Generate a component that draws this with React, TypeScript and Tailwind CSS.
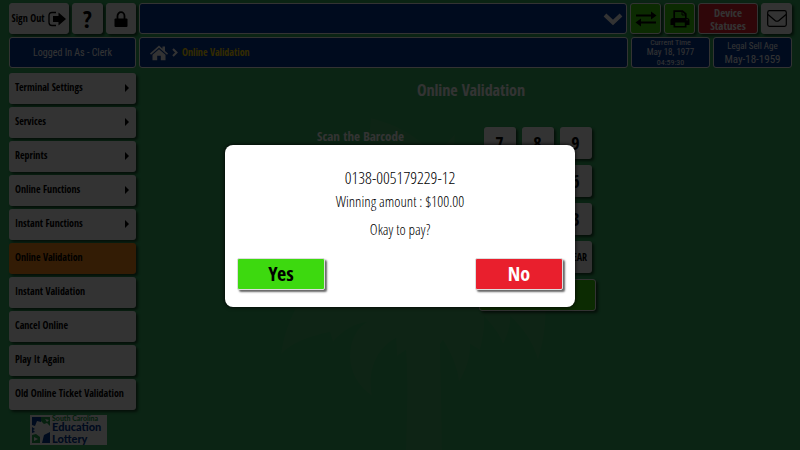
import type { ReactNode } from "react";

const bold = "font-['Open_Sans_Condensed','Roboto_Condensed','Liberation_Sans',sans-serif] font-bold";
const regular = "font-['Open_Sans_Condensed_Light','Roboto_Condensed','Liberation_Sans',sans-serif] font-normal";
const compact = "font-['Roboto_Condensed','Liberation_Sans',sans-serif] font-normal";
const raised = "shadow-[2px_2px_3px_rgba(0,0,0,0.6)]";
const panel = "rounded-[3px] border border-white bg-[#003796] text-white";

const menu = [
  { label: "Terminal Settings", more: true },
  { label: "Services", more: true },
  { label: "Reprints", more: true },
  { label: "Online Functions", more: true },
  { label: "Instant Functions", more: true },
  { label: "Online Validation", active: true },
  { label: "Instant Validation" },
  { label: "Cancel Online" },
  { label: "Play It Again" },
  { label: "Old Online Ticket Validation" },
];

const keys = ["7", "8", "9", "4", "5", "6", "1", "2", "3", "0", "00", "CLEAR"];

function ToolButton({ label, className, children }: { label: string; className: string; children: ReactNode }) {
  return (
    <button
      aria-label={label}
      className={`flex h-[31px] shrink-0 items-center justify-center rounded-[3px] border border-white ${raised} ${className}`}
    >
      {children}
    </button>
  );
}

function SignOutIcon() {
  return (
    <svg viewBox="0 0 18 16" className="h-4 w-[18px]">
      <path d="M8 1.5H4Q1 1.5 1 4.500V11.500Q1 14.500 4 14.500H8" fill="none" stroke="#000" strokeWidth="1.300" />
      <path d="M5 5H10.500V1.500L18 8L10.500 14.500V11H5Z" />
    </svg>
  );
}

function LockIcon() {
  return (
    <svg viewBox="0 0 14 16" className="h-4 w-[14px]">
      <path d="M3.500 8V5A3.500 3.800 0 0 1 10.500 5V8" fill="none" stroke="#000" strokeWidth="1.800" />
      <rect x="0.500" y="7.500" width="13" height="8.500" rx="1" />
    </svg>
  );
}

function ArrowsIcon() {
  return (
    <svg viewBox="0 0 22 16" className="h-4 w-[22px]">
      <path d="M1 3.500H16V0.500L21.500 4.500L16 8.500V5.500H1Z" />
      <path d="M21 10.500H6V7.500L0.500 11.500L6 15.500V12.500H21Z" />
    </svg>
  );
}

function PrinterIcon() {
  return (
    <svg viewBox="0 0 20 18" className="h-[18px] w-5">
      <path d="M4.200 9V1.200H12.500L15.800 4V9" fill="none" stroke="#000" strokeWidth="1.700" />
      <path d="M12 1V5H16" fill="none" stroke="#000" strokeWidth="1" />
      <path
        fillRule="evenodd"
        d="M3 8H17Q19.500 8 19.500 10.500V15H16.500V17.500H3.500V15H0.500V10.500Q0.500 8 3 8ZM5.200 12.500V16H14.800V12.500ZM16.300 9.800A.8 .8 0 1 0 17.900 9.800A.8 .8 0 1 0 16.300 9.800Z"
      />
    </svg>
  );
}

function MailIcon() {
  return (
    <svg viewBox="0 0 20 17" className="h-[17px] w-5" fill="none" stroke="#000" strokeWidth="1.200">
      <rect x="0.700" y="0.700" width="18.600" height="15.600" rx="1.800" />
      <path d="M1 4.500L8 10.500Q10 12 12 10.500L19 4.500" />
    </svg>
  );
}

function HomeIcon() {
  return (
    <svg viewBox="0 0 18 16" className="h-4 w-[18px]" fill="#fff">
      <path d="M9 0.500L12.500 3.700V1.500H15V6L18 8.600L17 9.800L9 2.800L1 9.800L0 8.600Z" />
      <path d="M9 4.200L15.500 9.800V15.300H10.800V10.800H7.200V15.300H2.500V9.800Z" />
    </svg>
  );
}

function LotteryLogo() {
  return (
    <div role="img" aria-label="South Carolina Education Lottery" className="ml-[21px] mt-[2px] flex h-[30px] w-[77px] items-center gap-[2px] bg-white pl-[2px]">
      <svg viewBox="0 0 18 26" className="h-[26px] w-[18px] shrink-0">
        <path d="M0 0H9V5L5 4L3 9L0 8Z" fill="#003796" />
        <path d="M9 0H18V9L15 6L12 7L9 4Z" fill="#22a04c" />
        <path d="M0 18L4 17L8 20V26H0Z" fill="#22a04c" />
        <path d="M10 26L12 18L18 15V26Z" fill="#003796" />
        <path d="M0 10L3 12L1 13L3 15L0 16Z" fill="#003796" />
        <path d="M2 20V24L6 22Z" fill="#fff" />
        <path d="M13 2L17 3L15 5Z" fill="#fff" />
      </svg>
      <div className="flex flex-col font-['Lato','Liberation_Sans',sans-serif] font-black text-[#003796]">
        <span className="whitespace-nowrap text-[7px] leading-[7px] text-[#22a04c]">South Carolina</span>
        <span className="text-[11px] leading-[10px]">Education</span>
        <span className="text-[11px] leading-[13px]">Lottery</span>
      </div>
    </div>
  );
}

function Palmetto() {
  return (
    <svg viewBox="0 0 300 340" className="absolute bottom-0 left-[275px] h-[340px] w-[300px]" fill="#46b469">
      <path d="M96 8C126 16 146 28 160 48C166 38 172 34 180 24C180 38 176 50 172 60C220 60 262 110 270 190C272 215 268 232 263 250C258 232 248 218 235 206C236 216 232 226 228 234C224 222 214 212 209 206C210 216 208 228 205 240L195 234C196 248 190 262 184 272C182 254 174 240 168 230L165 234C166 280 167 310 167 340H131C132 300 133 270 131 240L122 246L121 228C102 238 92 260 97 286C80 274 72 256 76 236C78 226 84 216 92 212C78 214 66 222 58 232L55 222C36 226 18 232 6 244C12 200 40 160 84 130Z" />
    </svg>
  );
}

export default function App() {
  return (
    <div className={`relative min-h-screen overflow-hidden bg-[#37b464] text-black ${bold}`}>
      <Palmetto />

      <div className="relative flex flex-col gap-[3px] py-[3px] pl-[9px] pr-2">
        <header className="flex flex-col gap-[3px]">
          <div className="flex gap-[3px]">
            <div className="flex w-[127px] shrink-0 gap-[3px]">
              <ToolButton label="Sign Out" className="w-[60px] gap-1 bg-white text-[10px]">
                <span className="whitespace-nowrap">Sign Out</span>
                <SignOutIcon />
              </ToolButton>
              <ToolButton label="Help" className="flex-1 bg-white text-[24px] leading-6">
                ?
              </ToolButton>
              <ToolButton label="Lock" className="flex-1 bg-white">
                <LockIcon />
              </ToolButton>
            </div>
            <div className="relative flex min-w-0 flex-1">
              <select aria-label="Messages" className={`h-[31px] w-full appearance-none ${panel}`} />
              <svg viewBox="0 0 20 14" className="pointer-events-none absolute right-1 top-[9px] h-[14px] w-5" fill="none" stroke="#fff" strokeWidth="4">
                <path d="M2 3L10 10.500L18 3" />
              </svg>
            </div>
            <ToolButton label="Transfer" className="w-[31px] bg-[#3cd70a]">
              <ArrowsIcon />
            </ToolButton>
            <ToolButton label="Printer" className="w-[31px] bg-[#3cd70a]">
              <PrinterIcon />
            </ToolButton>
            <ToolButton label="Device Statuses" className="w-[60px] bg-[#e91f2d] text-[11px] leading-[13px] text-white">
              Device
              <br />
              Statuses
            </ToolButton>
            <ToolButton label="Mail" className="w-[31px] bg-white">
              <MailIcon />
            </ToolButton>
          </div>

          <div className="flex gap-[3px]">
            <div className={`flex h-[31px] w-[127px] shrink-0 items-center justify-center ${panel} ${compact} text-[10px]`}>
              Logged In As - Clerk
            </div>
            <nav aria-label="Breadcrumb" className={`flex h-[31px] min-w-0 flex-1 items-center gap-1 pl-[10px] text-[10px] ${panel}`}>
              <a href="#home" aria-label="Home">
                <HomeIcon />
              </a>
              <svg viewBox="0 0 6 9" className="h-[9px] w-[6px]" fill="none" stroke="#fff" strokeWidth="2">
                <path d="M1 1L4.500 4.500L1 8" />
              </svg>
              <a href="#validation" className="text-[#ffd700]">
                Online Validation
              </a>
            </nav>
            <div className={`flex h-[31px] w-[79px] shrink-0 flex-col items-center justify-center text-[8px] leading-[9px] ${panel} ${compact}`}>
              <span>Current Time</span>
              <span className="text-[9px] leading-[11px]">May 18, 1977</span>
              <span>04:59:30</span>
            </div>
            <div className={`flex h-[31px] w-[79px] shrink-0 flex-col items-center justify-center text-[9px] leading-[13px] ${panel} ${compact}`}>
              <span>Legal Sell Age</span>
              <span className="text-[11px]">May-18-1959</span>
            </div>
          </div>
        </header>

        <div className="flex pt-[2px]">
          <aside className="flex w-[127px] shrink-0 flex-col gap-[3px]">
            {menu.map((item) => (
              <button
                key={item.label}
                className={`flex h-[31px] items-center justify-between whitespace-nowrap rounded-[3px] pb-[2px] pl-[6px] pr-[7px] text-left text-[10px] ${raised} ${
                  item.active ? "bg-[#ff8c19]" : "bg-white"
                }`}
              >
                {item.label}
                {item.more && (
                  <svg viewBox="0 0 4 8" className="h-2 w-1">
                    <path d="M0 0L4 4L0 8Z" />
                  </svg>
                )}
              </button>
            ))}
            <LotteryLogo />
          </aside>

          <main className="flex flex-1 flex-col items-center pl-[14px] pt-[5px] text-white">
            <h1 className="text-[16px] leading-6">Online Validation</h1>
            <div className="mt-[25px] flex pr-[104px]">
              <p className="w-[237px] text-center text-[13px] leading-[18px]">Scan the Barcode</p>
              <div className="flex w-[117px] flex-col items-center gap-[6px] text-black">
                <div className="grid grid-cols-3 gap-[6px]">
                  {keys.map((key) => (
                    <button
                      key={key}
                      className={`flex size-8 items-center justify-center rounded-[3px] bg-white ${raised} ${
                        key === "CLEAR" ? "text-[10px]" : "text-[18px]"
                      }`}
                    >
                      {key}
                    </button>
                  ))}
                </div>
                <button aria-label="Submit" className={`h-8 w-full rounded-[3px] border border-white bg-[#3cd70a] ${raised}`} />
              </div>
            </div>
          </main>
        </div>
      </div>

      <div className="absolute inset-0 flex justify-center bg-black/80">
        <div
          role="dialog"
          aria-modal="true"
          aria-label="Confirm payment"
          className={`mt-[145px] flex h-[162px] w-[350px] flex-col rounded-[8px] bg-white px-3 pt-[21px] text-center text-black shadow-[0_0_4px_#000] ${regular}`}
        >
          <p className="text-[17px] leading-6">0138-005179229-12</p>
          <p className="text-[15px] leading-[22px]">Winning amount : $100.00</p>
          <p className="mt-[6px] text-[15px] leading-[22px]">Okay to pay?</p>
          <div className={`mt-[18px] flex justify-between text-[20px] ${bold}`}>
            <button className="h-8 w-[88px] rounded-[2px] border border-[#ddd] bg-[#3dd90f] leading-6 text-black shadow-[2px_2px_2px_rgba(0,0,0,0.6)]">
              Yes
            </button>
            <button className="h-8 w-[88px] rounded-[2px] border border-[#ddd] bg-[#e91f2d] leading-6 text-white shadow-[2px_2px_2px_rgba(0,0,0,0.6)]">
              No
            </button>
          </div>
        </div>
      </div>
    </div>
  );
}
